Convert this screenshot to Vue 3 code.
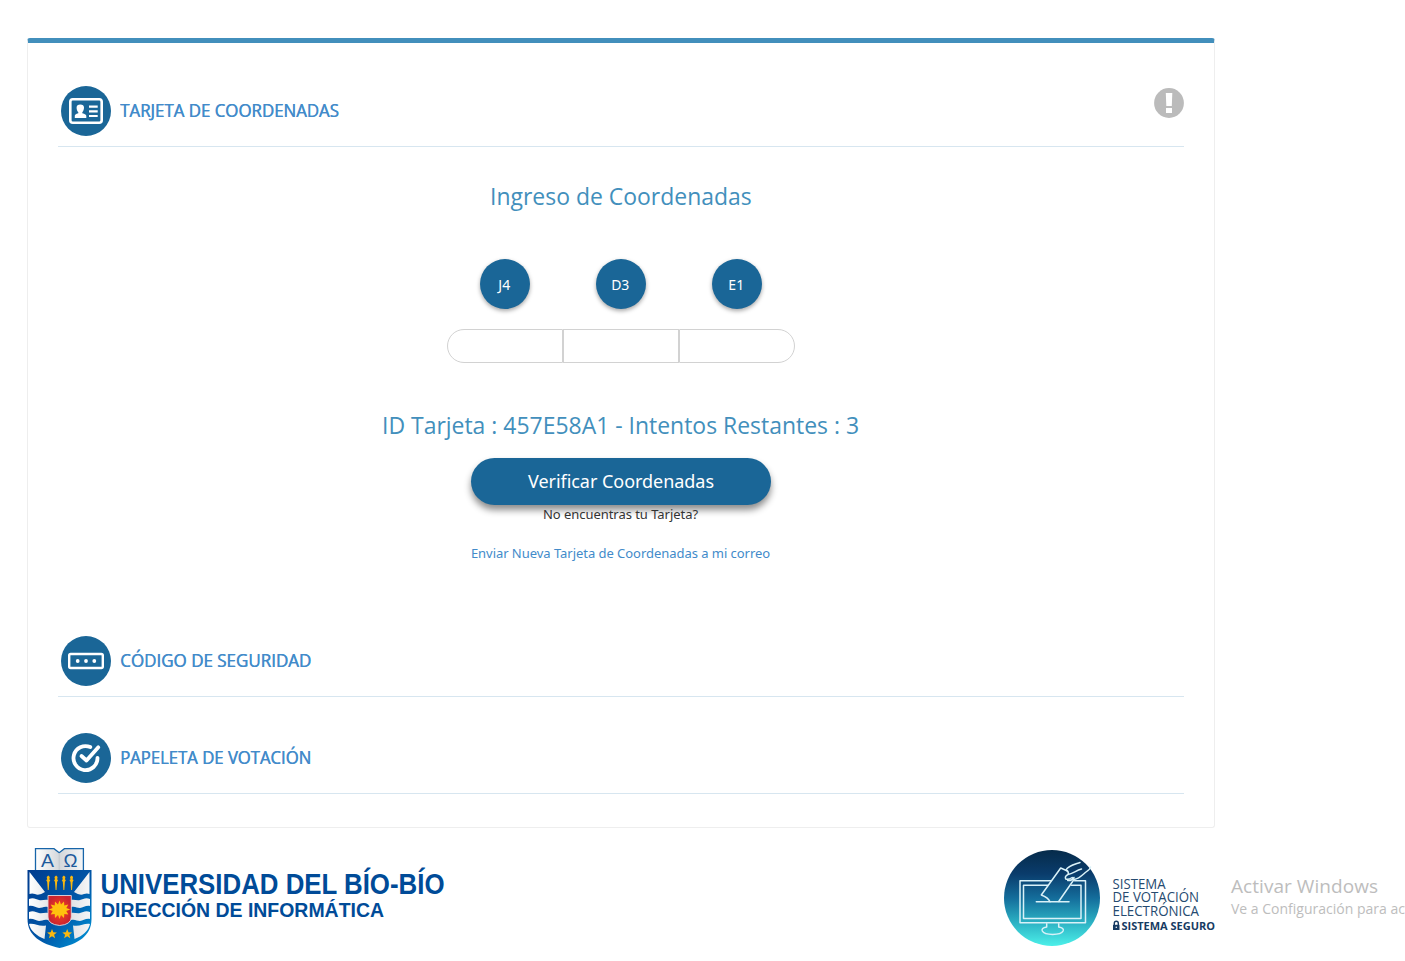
<script setup>
const codes = ['J4', 'D3', 'E1']
const torches = [21.3, 29.1, 36.9, 44.6]
const stars = [25, 40.2]
</script>

<template>
  <div class="page">
    <main class="card">
      <section class="panel first">
        <header class="head">
          <svg class="badge" viewBox="0 0 50 50">
            <circle cx="25" cy="25" r="25" fill="#1a6697" />
            <rect x="9.3" y="13.3" width="31.400" height="23.400" rx="2.5" fill="none" stroke="#fff" stroke-width="2.600" />
            <path d="M13.800 32v-2c0-1.300 1-1.900 3.500-2.700v-1c-1.300-1.200-1.700-3-1.700-4.700 0-2 1.300-3.200 3.700-3.200s3.700 1.200 3.700 3.200c0 1.700-.500 3.500-1.700 4.700v1c2.600.800 4 1.400 4 2.700v2z" fill="#fff" />
            <path d="M28 20.600h8.700M28 25.300h8.700M28 30h8.700" stroke="#fff" stroke-width="2.200" />
          </svg>
          <h2 class="t1">TARJETA DE COORDENADAS</h2>
          <svg class="alert" viewBox="0 0 30 30">
            <circle cx="15" cy="15" r="14.900" fill="#bbb" />
            <path d="M11.800 5h6.500l-.500 13h-5.500zM12 20h6v5h-6z" fill="#fff" />
          </svg>
        </header>
        <div class="body">
          <h3 class="prompt">Ingreso de Coordenadas</h3>
          <div class="codes">
            <div v-for="c in codes" :key="c" class="cell"><span class="code">{{ c }}</span></div>
          </div>
          <div class="inputs">
            <input v-for="c in codes" :key="c" type="text" :aria-label="c" />
          </div>
          <h3 class="card-id">ID Tarjeta : 457E58A1 - Intentos Restantes : 3</h3>
          <button class="verify">Verificar Coordenadas</button>
          <p class="lost">No encuentras tu Tarjeta?</p>
          <a class="send">Enviar Nueva Tarjeta de Coordenadas a mi correo</a>
        </div>
      </section>
      <section class="panel">
        <header class="head">
          <svg class="badge" viewBox="0 0 50 50">
            <circle cx="25" cy="25" r="25" fill="#1a6697" />
            <rect x="8.200" y="18" width="33.600" height="14" rx="1.500" fill="none" stroke="#fff" stroke-width="2.400" />
            <g fill="#fff"><circle cx="16.700" cy="25" r="1.900" /><circle cx="25" cy="25" r="1.900" /><circle cx="33.300" cy="25" r="1.900" /></g>
          </svg>
          <h2 class="t2">CÓDIGO DE SEGURIDAD</h2>
        </header>
      </section>
      <section class="panel">
        <header class="head">
          <svg class="badge" viewBox="0 0 50 50">
            <circle cx="25" cy="25" r="25" fill="#1a6697" />
            <g fill="none" stroke="#fff" stroke-width="3.800" stroke-linecap="round" stroke-linejoin="round">
              <path d="M29.300 14.100a12 12 0 1 0 7.200 10.700" />
              <path d="M20.500 23l5 4.500L37.300 14.300" />
            </g>
          </svg>
          <h2 class="t3">PAPELETA DE VOTACIÓN</h2>
        </header>
      </section>
    </main>

    <footer class="foot">
      <svg class="ubb" viewBox="0 0 430 104" width="430" height="104">
        <defs>
          <linearGradient id="shield" x1="0" x2="1" y1="0" y2="1">
            <stop offset="0" stop-color="#003b8e" /><stop offset=".55" stop-color="#0057a8" /><stop offset="1" stop-color="#009bdc" />
          </linearGradient>
          <linearGradient id="silver" x1="0" x2="1" y1="0" y2="0">
            <stop offset="0" stop-color="#fff" /><stop offset=".5" stop-color="#d4d7db" /><stop offset="1" stop-color="#f5f6f7" />
          </linearGradient>
          <radialGradient id="red"><stop offset="0" stop-color="#ff4a1c" /><stop offset="1" stop-color="#cb2430" /></radialGradient>
          <clipPath id="shape"><path d="M.500 22h64v49c0 17-14 25-32 29C14.500 96 .500 88 .500 71z" /></clipPath>
        </defs>
        <path d="M8.500 24V.700h18.500l5.200 4 5.200-4h19V24z" fill="url(#silver)" stroke="#1765a9" stroke-width="1.300" />
        <path d="M32.200 5v17" stroke="#c3c8ce" />
        <g clip-path="url(#shape)">
          <path d="M0 22h65v79H0z" fill="url(#shield)" />
          <g fill="url(#silver)">
            <path d="M2.500 24L18 44q-6 4-10 2-3-1-5.500 0zM62.500 24L47 44q6 4 10 2 3-1 5.500 0z" />
            <path d="M2 51c4-2 7 0 10 1s6-1 9 0v7c-4-1-6 1-9 1s-6-3-10-2zM63 51c-4-2-7 0-10 1s-6-1-9 0v7c4-1 6 1 9 1s6-3 10-2z" />
            <path d="M2 64c4-2 7 0 10 1s6-1 9 0v7c-4-1-6 1-9 1s-6-3-10-2zM63 64c-4-2-7 0-10 1s-6-1-9 0v7c4-1 6 1 9 1s6-3 10-2z" />
            <path d="M2 76c6-1 10 3 17 1.500L17.500 91C10 88 3.500 83 2 76zM63 76c-6-1-10 3-17 1.500L47.500 91c8-3 14-8 15.500-15z" />
          </g>
        </g>
        <path d="M21 47.500h23.300V69q0 7.500-11.600 8.500Q21 76.500 21 69z" fill="url(#red)" stroke="#e3d9de" stroke-width=".9" />
        <path transform="translate(0 .5)" d="M32.500 52l1.500 4 3-3 .300 4 4-1-2 3.500 4 1.500-4 1.500 2 3.500-4-.500-.300 4-3-3-1.500 4-1.500-4-3 3-.300-4-4 .500 2-3.500-4-1.500 4-1.500-2-3.500 4 1 .300-4 3 3z" fill="#ffc20e" />
        <g fill="#f9b810">
          <path v-for="x in torches" :key="x" :d="`M${x} 27.500l1.500 1.500-.500 2.500 1 .500-1 2-.600 8h-.900l-.600-8-1-2 1-.500-.500-2.500z`" />
          <path v-for="x in stars" :key="x" :d="`M${x} 81l1.300 3.300 3.600.200-2.800 2.300 1 3.500-3.100-2-3.100 2 1-3.500-2.800-2.300 3.600-.200z`" />
        </g>
        <g fill="#1d5a9c" font-family="Liberation Sans, sans-serif" font-size="17.500">
          <text x="14" y="19" textLength="13" lengthAdjust="spacingAndGlyphs">Α</text>
          <text x="36.500" y="19" textLength="14" lengthAdjust="spacingAndGlyphs">Ω</text>
        </g>
        <g fill="#004b98" font-family="Liberation Sans, sans-serif" font-weight="700">
          <text x="73.500" y="46" font-size="29" textLength="344" lengthAdjust="spacingAndGlyphs">UNIVERSIDAD DEL BÍO-BÍO</text>
          <text x="74" y="69" font-size="19.500" textLength="283" lengthAdjust="spacingAndGlyphs">DIRECCIÓN DE INFORMÁTICA</text>
        </g>
      </svg>

      <svg class="vote" viewBox="0 0 212 98" width="212" height="98">
        <defs>
          <linearGradient id="sea" x1="0" x2="0" y1="0" y2="1">
            <stop offset="0" stop-color="#062b4a" /><stop offset=".25" stop-color="#0a3c6c" /><stop offset=".5" stop-color="#146d9b" /><stop offset=".75" stop-color="#2bb0c3" /><stop offset="1" stop-color="#4cf0e9" />
          </linearGradient>
        </defs>
        <circle cx="49" cy="48" r="48" fill="url(#sea)" />
        <g fill="none" stroke="#d9f1f8" stroke-width="1.500" stroke-linejoin="round" stroke-linecap="round">
          <path d="M48 30.800H17v42h65.500v-42H71.500" />
          <path d="M45 35.200H20.500v33.200H78V35.200H68.500" />
          <path d="M33.300 51.800H66" />
          <path d="M64.500 21L57.700 18 38.300 45c4 1.500 7 3 8.700 6.700M55.700 51.500L71 29.500" />
          <path d="M77 12.500c-6 2-12 3-14 7.500 2 1 3 2 2 4.500-2 1-3 3-2.300 4.500 2 .500 5-.500 6.500-1.500M64.700 30.500c2 .300 5-1 6.300-3M65 24.500c5-1 8-4 13.500-5.500M71 29.500c5-.500 9-5 12-7.500 3-2 4.500-3 4.500-5" />
          <path d="M43.700 73.700V77c-4 .700-5.200 2-4.400 4 2.500 4.600 18.300 4.600 20.800 0 .800-2-.400-3.300-4.400-4v-3.300" />
        </g>
        <g fill="#254a70" font-family="Open Sans, sans-serif">
          <text x="109.500" y="39" font-size="14" textLength="53" lengthAdjust="spacingAndGlyphs">SISTEMA</text>
          <text x="109.500" y="52.300" font-size="14" textLength="86.500" lengthAdjust="spacingAndGlyphs">DE VOTACIÓN</text>
          <text x="109.500" y="65.800" font-size="14" textLength="86.500" lengthAdjust="spacingAndGlyphs">ELECTRÓNICA</text>
          <text x="118.500" y="79.500" font-size="10" font-weight="700" fill="#173b63" textLength="93.500" lengthAdjust="spacingAndGlyphs">SISTEMA SEGURO</text>
        </g>
        <path d="M110 74.800h6.500v5.200H110z" fill="#173b63" />
        <path d="M111.300 75v-1.700a2 2 0 0 1 4 0V75" fill="none" stroke="#173b63" stroke-width="1.400" />
        <circle cx="113.300" cy="77.200" r=".8" fill="#fff" />
      </svg>
      <div class="watermark">
        <div class="w1">Activar Windows</div>
        <div class="w2">Ve a Configuración para activar Windows.</div>
      </div>
    </footer>
  </div>
</template>

<style scoped>
.page { width: 1405px; height: 961px; box-sizing: border-box; padding: 38px 0 0 27px; overflow: hidden; background: #fff; font-family: "Open Sans", "Noto Sans", sans-serif; }
.card { width: 1188px; height: 790px; box-sizing: border-box; border: 1px solid #eee; border-top: 5px solid #428fbc; border-radius: 3px; padding: 43px 30px 0; }
.head { display: flex; align-items: flex-start; height: 60px; padding-left: 3px; border-bottom: 1px solid #d7e6f0; }
.badge { width: 50px; height: 50px; }
.alert { width: 30px; height: 30px; margin-left: auto; margin-top: 2px; }
h2, h3, p { margin: 0; font-weight: 400; white-space: nowrap; }
h2 { margin-left: 9px; font-size: 18px; line-height: 48px; color: #428bca; text-shadow: .5px 0 0 #428bca; transform-origin: 0 50%; }
.t1 { transform: scaleX(.936); }
.t2 { transform: scaleX(.943); }
.t3 { transform: scaleX(.927); }
.first { height: 550px; }
.panel:not(.first) { height: 97px; }
.body { display: flex; flex-direction: column; align-items: center; }
h3 { font-size: 24px; line-height: 30px; color: #428fbc; transform: scaleX(.956); }
.prompt { margin-top: 34px; }
.codes { display: flex; margin-top: 48px; }
.cell { width: 116px; display: flex; justify-content: center; }
.code { width: 50px; height: 50px; box-sizing: border-box; padding-right: 1.5px; border-radius: 50%; background: #1a6697; color: #fff; font: 14px/51px "Noto Sans", sans-serif; text-align: center; box-shadow: 0 2px 4px rgba(0, 0, 0, .35); }
.inputs { display: flex; margin-top: 20px; }
input { width: 116px; height: 34px; box-sizing: border-box; border: 1px solid #d2d2d2; padding: 6px 12px; background: #fff; outline: none; }
input:first-child { border-radius: 17px 0 0 17px; }
input:last-child { border-radius: 0 17px 17px 0; }
.card-id { margin-top: 47px; }
.verify { width: 300px; height: 47px; margin-top: 18px; border: 0; border-radius: 24px; background: #1a6697; color: #fff; font: 18px/47px "Noto Sans", sans-serif; letter-spacing: -.04px; padding: 0; box-shadow: 0 5px 7px rgba(0, 0, 0, .45); }
.lost { position: relative; padding-right: 1px; font: 13px/18px "Noto Sans", sans-serif; letter-spacing: -.04px; color: #333; }
.send { margin-top: 21px; padding-right: 1px; font: 13px/18px "Noto Sans", sans-serif; letter-spacing: -.04px; color: #428bca; white-space: nowrap; }
.foot { display: flex; margin-top: 20px; }
.ubb { flex: none; }
.vote { flex: none; margin-left: 546px; margin-top: 2px; }
.watermark { margin-left: 16px; margin-top: 25px; color: #bdbdbd; white-space: nowrap; }
.w1 { font-size: 19px; line-height: 26px; letter-spacing: .05px; }
.w2 { font-size: 14px; line-height: 20px; }
</style>

<style>
body { overflow: hidden; }
</style>
